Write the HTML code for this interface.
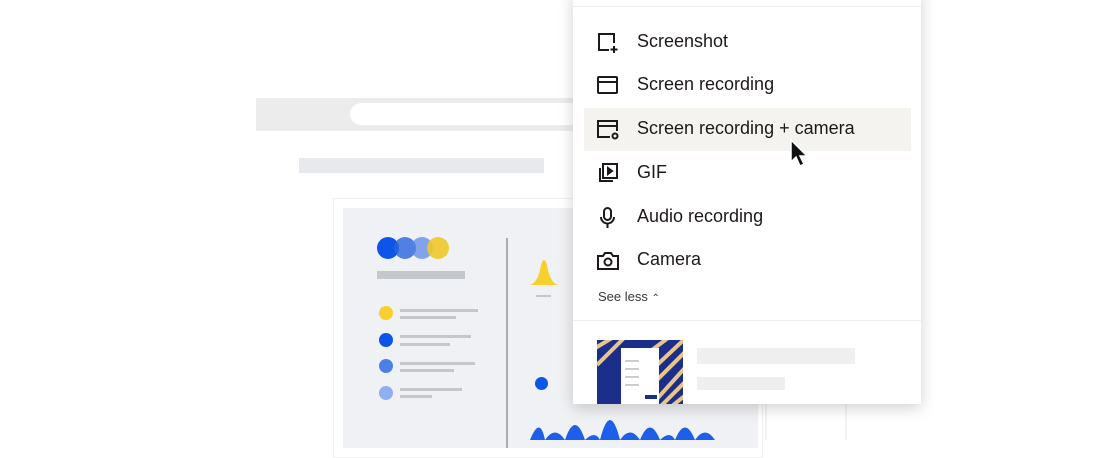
<!DOCTYPE html>
<html><head><style>
*{margin:0;padding:0;box-sizing:border-box}
body{width:1100px;height:440px;background:#fff;position:relative;overflow:hidden;font-family:"Liberation Sans",sans-serif}
.a{position:absolute}
.item{position:absolute;left:637px;font-size:18px;color:#1e1919;line-height:20px}
.ic{position:absolute;left:596px}
</style></head><body>
<!-- browser bar -->
<div class="a" style="left:256px;top:98px;width:400px;height:33px;background:#ececec"></div>
<div class="a" style="left:350px;top:103px;width:300px;height:22px;background:#fff;border-radius:11px"></div>
<div class="a" style="left:299px;top:158px;width:245px;height:15px;background:#e8e9ec"></div>
<!-- card -->
<div class="a" style="left:333px;top:198px;width:430px;height:260px;background:#fff;border:1px solid #f0f0f0"></div>
<div class="a" style="left:343px;top:208px;width:415px;height:240px;background:#f0f1f4"></div>
<div class="a" style="left:506px;top:238px;width:2px;height:210px;background:#a8abb1"></div>
<div class="a" style="left:765px;top:400px;width:2px;height:40px;background:#f2f2f2"></div>
<div class="a" style="left:845px;top:400px;width:2px;height:40px;background:#f2f2f2"></div>
<!-- circles -->
<div class="a" style="left:377px;top:237px;width:22px;height:22px;border-radius:50%;background:#0d55e8"></div>
<div class="a" style="left:394px;top:237px;width:22px;height:22px;border-radius:50%;background:rgba(40,100,220,.8)"></div>
<div class="a" style="left:411px;top:237px;width:22px;height:22px;border-radius:50%;background:rgba(80,130,230,.7)"></div>
<div class="a" style="left:427px;top:237px;width:22px;height:22px;border-radius:50%;background:rgba(240,200,40,.9)"></div>
<div class="a" style="left:377px;top:271px;width:88px;height:8px;background:#c4c7cc"></div>
<div class="a" style="left:379px;top:306px;width:14px;height:14px;border-radius:50%;background:#f7cf2f"></div>
<div class="a" style="left:400px;top:309px;width:78px;height:3px;background:#c4c7cc"></div>
<div class="a" style="left:400px;top:316px;width:56px;height:3px;background:#c4c7cc"></div>
<div class="a" style="left:379px;top:333px;width:14px;height:14px;border-radius:50%;background:#0d55e8"></div>
<div class="a" style="left:400px;top:335px;width:71px;height:3px;background:#c4c7cc"></div>
<div class="a" style="left:400px;top:343px;width:50px;height:3px;background:#c4c7cc"></div>
<div class="a" style="left:379px;top:359px;width:14px;height:14px;border-radius:50%;background:#4d80e6"></div>
<div class="a" style="left:400px;top:362px;width:75px;height:3px;background:#c4c7cc"></div>
<div class="a" style="left:400px;top:369px;width:54px;height:3px;background:#c4c7cc"></div>
<div class="a" style="left:379px;top:386px;width:14px;height:14px;border-radius:50%;background:#8fb0f0"></div>
<div class="a" style="left:400px;top:388px;width:62px;height:3px;background:#c4c7cc"></div>
<div class="a" style="left:400px;top:395px;width:32px;height:3px;background:#c4c7cc"></div>
<svg class="a" style="left:528px;top:255px" width="50" height="45"><path d="M2 30 Q10 28 13 10 Q16 0 19 10 Q22 28 30 30Z" fill="#f7cf2f"/><rect x="8" y="40" width="15" height="2" fill="#c4c7cc"/></svg>
<div class="a" style="left:535px;top:377px;width:13px;height:13px;border-radius:50%;background:#0d55e8"></div>
<svg class="a" style="left:525px;top:405px" width="200" height="35"><path d="M5 35 Q15 10 20 35 Q30 20 40 35 Q50 5 60 35 Q70 25 75 35 Q85 -5 95 35 Q105 20 115 35 Q125 10 135 35 Q145 25 150 35 Q160 10 170 35 Q180 20 190 35Z" fill="#1f5ee8"/></svg>
<!-- dropdown -->
<div class="a" style="left:573px;top:-10px;width:348px;height:414px;background:#fff;box-shadow:0 4px 14px rgba(0,0,0,.18)"></div>
<div class="a" style="left:573px;top:6px;width:348px;height:1px;background:#eeeeec"></div>
<div class="a" style="left:584px;top:108px;width:327px;height:43px;background:#f5f3f0"></div>
<svg class="ic" style="top:31px" width="24" height="24" viewBox="0 0 24 24" fill="none" stroke="#1e1919" stroke-width="2"><path d="M13 19H3V3h15v9"/><path d="M18 15v7M14.5 18.5h7"/></svg>
<svg class="ic" style="top:74px" width="24" height="24" viewBox="0 0 24 24" fill="none" stroke="#1e1919" stroke-width="2"><rect x="2" y="3" width="19" height="16" rx="1"/><path d="M2 8h19"/></svg>
<svg class="ic" style="top:118px" width="24" height="24" viewBox="0 0 24 24" fill="none" stroke="#1e1919" stroke-width="2"><path d="M14 19H2V3h19v10M2 8h19"/><circle cx="19" cy="18" r="2.5"/></svg>
<svg class="ic" style="top:162px" width="24" height="24" viewBox="0 0 24 24" fill="none" stroke="#1e1919" stroke-width="2"><rect x="7" y="2" width="14" height="14"/><path d="M4 6v13h13"/><path d="M12 6l4 3-4 3z" fill="#1e1919"/></svg>
<svg class="ic" style="top:206px" width="24" height="24" viewBox="0 0 24 24" fill="none" stroke="#1e1919" stroke-width="2"><rect x="8" y="2" width="7" height="12" rx="3.5"/><path d="M5 11a6.5 6.5 0 0 0 13 0M11.5 18v4"/></svg>
<svg class="ic" style="top:249px" width="24" height="24" viewBox="0 0 24 24" fill="none" stroke="#1e1919" stroke-width="2"><path d="M2 7h5l2-3h6l2 3h5v13H2z"/><circle cx="12" cy="13" r="3.5"/></svg>
<div class="item" style="top:31px">Screenshot</div>
<div class="item" style="top:74px">Screen recording</div>
<div class="item" style="top:118px">Screen recording + camera</div>
<div class="item" style="top:162px">GIF</div>
<div class="item" style="top:206px">Audio recording</div>
<div class="item" style="top:249px">Camera</div>
<div class="a" style="left:598px;top:289px;font-size:13px;color:#3a3636">See less <span style="font-size:10px">&#8963;</span></div>
<div class="a" style="left:573px;top:320px;width:348px;height:1px;background:#eeeeec"></div>
<svg class="a" style="left:597px;top:340px" width="86" height="64"><rect width="86" height="64" fill="#1b2f8a"/><g stroke="#e8c58a" stroke-width="4" fill="none"><path d="M-5 10 L20 -5M0 25 L30 -5M50 70 L95 20M60 70 L95 35M70 70 L95 50M55 10 L75 -5M60 25 L92 -5M55 45 L95 5"/></g><rect x="24" y="8" width="38" height="56" fill="#fff"/><rect x="48" y="55" width="12" height="4" fill="#1b2f8a"/><g fill="#ccc"><rect x="28" y="20" width="14" height="2"/><rect x="28" y="28" width="14" height="2"/><rect x="28" y="36" width="14" height="2"/><rect x="28" y="44" width="14" height="2"/></g></svg>
<div class="a" style="left:697px;top:348px;width:158px;height:16px;background:#efefef"></div>
<div class="a" style="left:697px;top:377px;width:88px;height:13px;background:#efefef"></div>
<!-- cursor -->
<svg class="a" style="left:789px;top:139px" width="20" height="30" viewBox="0 0 20 30"><path d="M2 1v22l5-5 4 9 4-2-4-8h7z" fill="#111" stroke="#fff" stroke-width="1.5"/></svg>
</body></html>
